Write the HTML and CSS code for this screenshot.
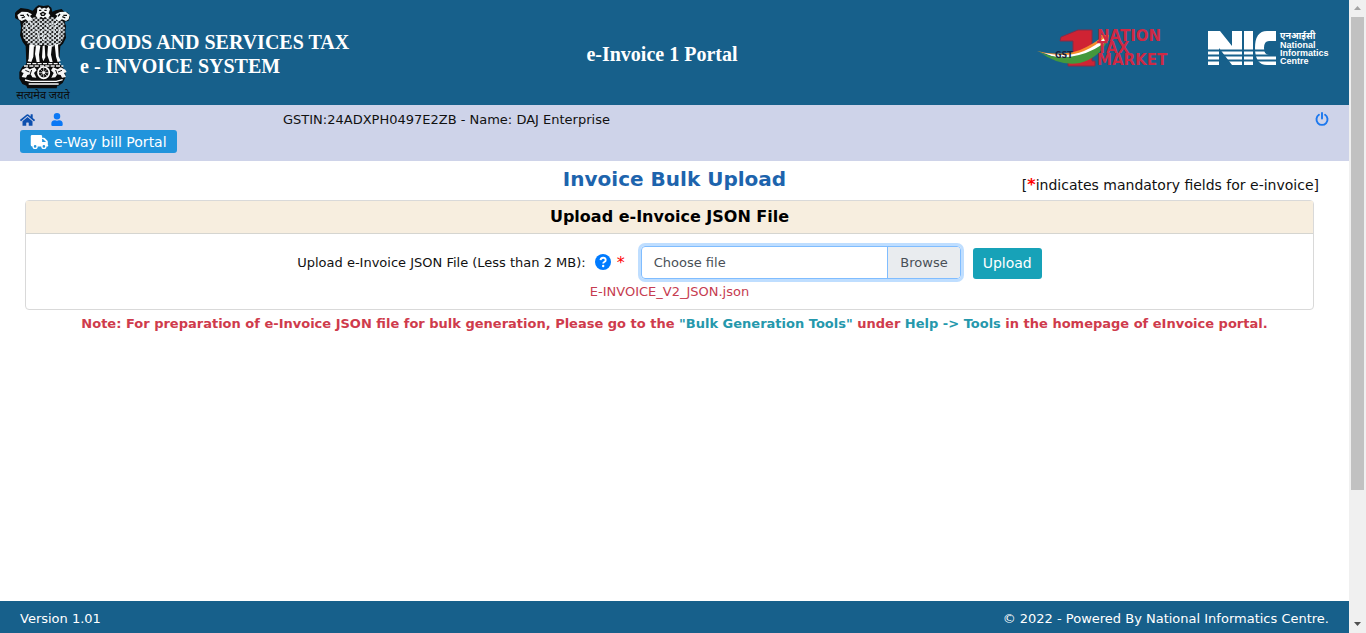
FILE: index.html
```html
<!DOCTYPE html>
<html lang="en">
<head>
<meta charset="utf-8">
<meta name="viewport" content="width=device-width, initial-scale=1">
<title>e-Invoice System</title>
<link rel="stylesheet" href="styles.css">
</head>
<body>
<div class="page">
  <header class="masthead">
    <div class="brand">
      <svg class="emblem" viewBox="45 12 168 294" role="img" aria-label="State Emblem of India">
        <defs>
          <pattern id="mane" width="14" height="12" patternUnits="userSpaceOnUse">
            <rect width="14" height="12" fill="#111"/>
            <path d="M0 3q4 5 7 0t7 0M-7 9q4 5 7 0t7 0t7 0t7 0" fill="none" stroke="#e8eef2" stroke-width="3"/>
          </pattern>
        </defs>
        <path d="M107 22l8-6 16 2 14-2 9 7 3 12 10-4 18-4 8 9 11 2 6 12-4 12-12 3 4 14-2 14 2 20-9 18-8 8-4 52 9 8 10 14v20l-8 16-12 8h-4l-2 8H82l-3-8-12-5-9-16v-20l9-16 12-8-2-54-9-12-8-20 3-24-3-20-14-7-4-13 8-9 12-9 22 3 14 5z" fill="#0b0b0b"/>
        <path d="M108 50l22 8 24-8 18 6 20 10 3 22-3 26-11 18-24 8-26-6-27 6-20-8-14-18-4-24 3-20 20-14z" fill="url(#mane)"/>
        <path d="M112 25l8-4 5 5 8-3 6 3 6-5 5 7-4 12 5 6-8 10-8-6-5 5-7-5-8 6-8-9 4-10z" fill="#f4f7f8"/>
        <path d="M117 31h7m9 0h7M122 41l7-4 7 4-4 5h-7z" stroke="#0b0b0b" stroke-width="4" fill="none"/>
        <path d="M52 45l13-10 18 1 13 7-6 5 7 8-10 8-11-6-11 5-9-5z M209 45l-12-10-17 1-14 7 6 5-6 8 10 8 10-6 12 5 8-5z" fill="#f4f7f8"/>
        <path d="M61 46h11m-7 8 10-4m6-8 6 7M201 46h-11m6 8-9-4m-7-8-6 7" stroke="#0b0b0b" stroke-width="4" fill="none"/>
        <path d="M78 76q10 15 8 44M91 66q14 22 10 64M105 70q10 30 14 58M119 68l12 52 12-52M158 68q-12 26-14 60M172 66q-14 24-12 62M186 76q-12 18-10 44" fill="none" stroke="#e9eef1" stroke-width="4" stroke-dasharray="7 5"/>
        <path d="M88 134l-2 42-3 8 11 2 6-16 2-36zM108 136l-3 26 5 24h9l-2-22 4-26zM128 138l-2 34 4 12 6-12-2-36zM144 138l-2 28 7 20h9l-5-22 3-28zM164 134l4 36 5 16 9-3-6-14-2-38z" fill="#fafafa"/>
        <path d="M81 191h101M72 198h118" stroke="#f5f5f5" stroke-width="4" stroke-dasharray="12 4"/>
        <circle cx="131" cy="218" r="17" fill="#111" stroke="#fff" stroke-width="5"/>
        <path d="M131 203v30M116 218h30M120 207l22 22M142 207l-22 22" stroke="#eee" stroke-width="2"/>
        <circle cx="131" cy="218" r="4" fill="#fff"/>
        <path d="M66 209l15-7 8 6 15-6 6 9-8 8 7 14-12-1-5-9-10 2-4 8-13-2 6-12-7-3zM196 209l-14-7-9 6-14-6-6 9 8 8-7 14 12-1 6-9 10 2 4 8 12-2-6-12 8-3z" fill="#f5f5f5"/>
        <path d="M76 211l12 5m7-6-5 14M186 211l-12 5m-7-6 5 14" stroke="#111" stroke-width="3"/>
        <path d="M75 240l18 4h76l19-5M86 252h90" fill="none" stroke="#fff" stroke-width="4"/>
        <text class="motto" x="129" y="298" text-anchor="middle">सत्यमेव जयते</text>
      </svg>
      <div class="brand-name">GOODS AND SERVICES TAX<br>e - INVOICE SYSTEM</div>
    </div>
    <div class="portal-name">e-Invoice 1 Portal</div>
    <div class="logos">
      <svg class="logo-tax" viewBox="0 0 158 44" role="img" aria-label="GST One Nation Tax Market">
        <path d="M26 11l17-7h14v31h3v5H33v-5h5V15H25z" fill="#cf2333" stroke="#842c49"/>
        <path d="M2 25q22 6 43-1 12-5 22-13l-3-2 10 0-2 8-3-2Q60 24 45 29 22 33 2 25z" fill="#f58c2c"/>
        <path d="M9 27q24 5 40-2 12-5 20-13l3 3Q63 26 49 32 29 36 9 27z" fill="#fff"/>
        <path d="M3 25q18 10 41 4 16-4 29-15-9 18-28 23-20 4-42-12z" fill="#44983c"/>
        <text class="gst-word" x="20" y="32">GST</text>
        <g class="tax-words"><text x="62" y="15">NATION</text><text x="62" y="27">TAX</text><text x="62" y="39">MARKET</text></g>
      </svg>
      <svg class="logo-nic" viewBox="0 0 122 40" role="img" aria-label="NIC National Informatics Centre">
        <path d="M1 3h12l12 15V3h10v34H25L12 20v17H1zM37 3h9v34h-9zM69 3v10H62q-5 0-5 7t5 7h7v10H60q-12 0-12-17T60 3z" fill="#fff"/>
        <path d="M0 22.500h70M0 27.500h70M0 32.500h70" stroke="#17608b" stroke-width="2"/>
        <g class="nic-words"><text class="nic-hindi" x="73" y="11">एनआईसी</text><text x="73" y="20">National</text><text x="73" y="28">Informatics</text><text x="73" y="36">Centre</text></g>
      </svg>
    </div>
  </header>

  <nav class="userbar">
    <div class="links">
      <div class="icon-links">
        <a class="home" href="#" aria-label="Home"><svg viewBox="0 0 576 512"><path fill="currentColor" d="M280 148L96 300v164q0 16 16 16h112q16 0 16-16v-96q0-16 16-16h64q16 0 16 16v96q0 16 16 16h112q16 0 16-16V300L296 148q-8-6-16 0zM572 251l-84-69V44q0-12-12-12h-56q-12 0-12 12v73l-90-74q-30-23-60 0L4 251q-9 9-2 17l26 31q8 9 17 2L280 107q8-6 16 0l235 194q9 7 17-2l26-31q7-10-2-17z"/></svg></a>
        <a class="user" href="#" aria-label="Profile"><svg viewBox="0 0 448 512"><path fill="currentColor" d="M224 256a128 128 0 1 0 0-256 128 128 0 0 0 0 256zm90 32h-17q-73 33-146 0h-17Q0 294 0 422v42q0 48 48 48h352q48 0 48-48v-42q0-128-134-134z"/></svg></a>
      </div>
      <a class="eway" href="#"><svg viewBox="0 0 640 512"><path fill="currentColor" fill-rule="evenodd" d="M48 0h320q48 0 48 48v48h60q20 0 34 14l100 100q14 14 14 34v108h-8q24 0 24 32t-24 32h-40a96 96 0 0 1-192 0H256a96 96 0 0 1-192 0H48q-48 0-48-48V48Q0 0 48 0zm368 144v112h144L448 144zM160 368a48 48 0 1 0 0 96 48 48 0 0 0 0-96zm320 0a48 48 0 1 0 0 96 48 48 0 0 0 0-96z"/></svg>e-Way bill Portal</a>
    </div>
    <div class="taxpayer">GSTIN:24ADXPH0497E2ZB - Name: DAJ Enterprise</div>
    <a class="power" href="#" aria-label="Log out"><svg viewBox="0 0 16 16" fill="none" stroke="currentColor" stroke-width="2.200" stroke-linecap="round"><path d="M4.500 3.200a6.300 6.300 0 1 0 7 0M8 1.200v6.300"/></svg></a>
  </nav>

  <main class="content">
    <div class="heading">
      <h1>Invoice Bulk Upload</h1>
      <p class="mandatory">[<b>*</b>indicates mandatory fields for e-invoice]</p>
    </div>
    <form class="card">
      <h2>Upload e-Invoice JSON File</h2>
      <div class="card-body">
        <div class="upload-row">
          <label for="json-file">Upload e-Invoice JSON File (Less than 2 MB):</label>
          <svg class="help" viewBox="0 0 16 16" role="img" aria-label="Help"><circle cx="8" cy="8" r="8" fill="#007bff"/><path d="M5.500 6.200q.4-2.500 2.700-2.500T10.700 6q0 1.300-1.400 2-1.100.6-1.100 1.600" fill="none" stroke="#fff" stroke-width="1.900"/><circle cx="8.200" cy="12" r="1.200" fill="#fff"/></svg>
          <span class="star">*</span>
          <div class="file-box">
            <input type="file" id="json-file" accept=".json">
            <span class="file-name">Choose file</span>
            <span class="browse">Browse</span>
          </div>
          <button class="upload" type="button">Upload</button>
        </div>
        <div class="chosen">E-INVOICE_V2_JSON.json</div>
      </div>
    </form>
    <p class="note">Note: For preparation of e-Invoice JSON file for bulk generation, Please go to the <span>"Bulk Generation Tools"</span> under <span>Help -&gt; Tools</span> in the homepage of eInvoice portal.</p>
  </main>

  <footer class="footer"><span>Version 1.01</span><span>© 2022 - Powered By National Informatics Centre.</span></footer>
</div>
<div class="scrollbar" aria-hidden="true">
  <svg viewBox="0 0 17 17"><path d="M5 10l3.500-4 3.500 4z" fill="#a3a3a3"/></svg>
  <div class="track"><div class="thumb"></div></div>
  <svg viewBox="0 0 17 17"><path d="M5 6h7l-3.500 4z" fill="#505050"/></svg>
</div>
</body>
</html>
```
FILE: styles.css
```css
* { box-sizing: border-box; }
body {
  margin: 0;
  min-height: 100vh;
  display: flex;
  background: #fff;
  color: #111;
  font: 13px/20px "DejaVu Sans", Verdana, sans-serif;
}
h1, h2, p { margin: 0; }
a { text-decoration: none; }
svg { display: block; flex: none; }
.page { flex: 1; min-width: 0; display: flex; flex-direction: column; }

.masthead {
  display: grid;
  grid-template-columns: 57fr auto 59fr;
  align-items: center;
  padding: 4px 20px 3px 15px;
  background: #17608b;
  color: #fff;
  font-family: "Liberation Serif", "Times New Roman", serif;
  font-weight: bold;
}
.brand { display: flex; align-items: center; gap: 9px; }
.brand-name { font-size: 20px; line-height: 24px; padding-top: 2px; }
.emblem { width: 56px; height: 98px; }
.motto { font: 33px "Noto Sans Devanagari", "Noto Sans", sans-serif; fill: #0b0b0b; }
.portal-name { font-size: 20px; line-height: 24px; padding-top: 2px; }
.logos { display: flex; align-self: start; justify-content: flex-end; align-items: center; gap: 14px; padding-top: 22px; }
.logo-tax { width: 158px; height: 44px; }
.tax-words { font: bold 15px "DejaVu Sans", sans-serif; fill: #cf2944; }
.gst-word { font: bold 8px "DejaVu Sans", sans-serif; fill: #17213d; }
.logo-nic { width: 122px; height: 40px; }
.nic-words { font: bold 9px "Liberation Sans", Arial, sans-serif; fill: #fff; }
.nic-hindi { font-family: "Noto Sans Devanagari", "Noto Sans", sans-serif; }

.userbar {
  display: flex;
  align-items: flex-start;
  padding: 4px 20px 8px;
  background: #ced3e9;
}
.links { width: 263px; }
.icon-links { display: flex; align-items: center; gap: 16px; height: 21px; }
.home { color: #0d4fae; }
.home svg { width: 15px; height: 14px; }
.user { color: #0b78f5; }
.user svg { width: 12px; height: 13px; }
.eway {
  display: inline-flex;
  align-items: center;
  gap: 5px;
  height: 23px;
  padding: 0 10px;
  border-radius: 3px;
  background: #2194dc;
  color: #fff;
  font-size: 14px;
  vertical-align: top;
}
.eway svg { width: 19px; height: 14px; }
.taxpayer { flex: 1; line-height: 22px; }
.power { padding: 3px 0; color: #1c78ee; }
.power svg { width: 14px; height: 14px; }

.content { flex: 1; padding: 6px 30px 0; }
.heading { display: grid; grid-template-columns: 1fr auto 1fr; height: 33px; }
h1 { grid-column: 2; font-size: 20px; line-height: 24px; color: #1d64ad; }
.mandatory { text-align: right; white-space: nowrap; font-size: 14px; line-height: 24px; padding-top: 6px; }
.mandatory b { color: #f00; font-size: 16px; line-height: 16px; }
.card { margin: 0 5px 0 -5px; border: 1px solid #d9d9d9; border-radius: 4px; }
h2 {
  padding: 4px 0;
  border-bottom: 1px solid #d5d5d0;
  background: #f7eedf;
  color: #000;
  font-size: 16px;
  line-height: 24px;
  text-align: center;
}
.card-body { padding: 12px 20px 7px; }
.upload-row { display: flex; justify-content: center; align-items: center; }
.help { width: 16px; height: 16px; margin: 0 6px 2px 9px; }
.star { width: 8px; margin-right: 14px; color: #f00; font-size: 16px; }
.file-box {
  position: relative;
  display: flex;
  width: 320px;
  height: 33px;
  margin-left: 2px;
  border: 1px solid #80bdff;
  border-radius: 4px;
  box-shadow: 0 0 0 3px #bfdeff;
  color: #495057;
  line-height: 31px;
}
.file-box input { position: absolute; inset: 0; width: 100%; height: 100%; margin: 0; opacity: 0; }
.file-name { flex: 1; padding-left: 12px; }
.browse { padding: 0 12px; border-left: 1px solid #80bdff; border-radius: 0 3px 3px 0; background: #e9ecef; }
.upload {
  margin: 2px 0 0 12px;
  padding: 5px 10px;
  border: 0;
  border-radius: 3px;
  background: #17a2b8;
  color: #fff;
  font: 14px/21px "DejaVu Sans", Verdana, sans-serif;
}
.chosen { padding-top: 3px; text-align: center; color: #c63c50; }
.note { padding-top: 4px; text-align: center; font-weight: bold; color: #cf3b4c; }
.note span { color: #2598ac; }

.footer {
  display: flex;
  justify-content: space-between;
  padding: 8px 20px 4px;
  background: #17608b;
  color: #fff;
}

.scrollbar { width: 17px; display: flex; flex-direction: column; background: #f0f0f0; }
.scrollbar svg { width: 17px; height: 17px; }
.track { flex: 1; padding: 0 2px; }
.thumb { height: 79%; background: #c1c1c1; }
```
